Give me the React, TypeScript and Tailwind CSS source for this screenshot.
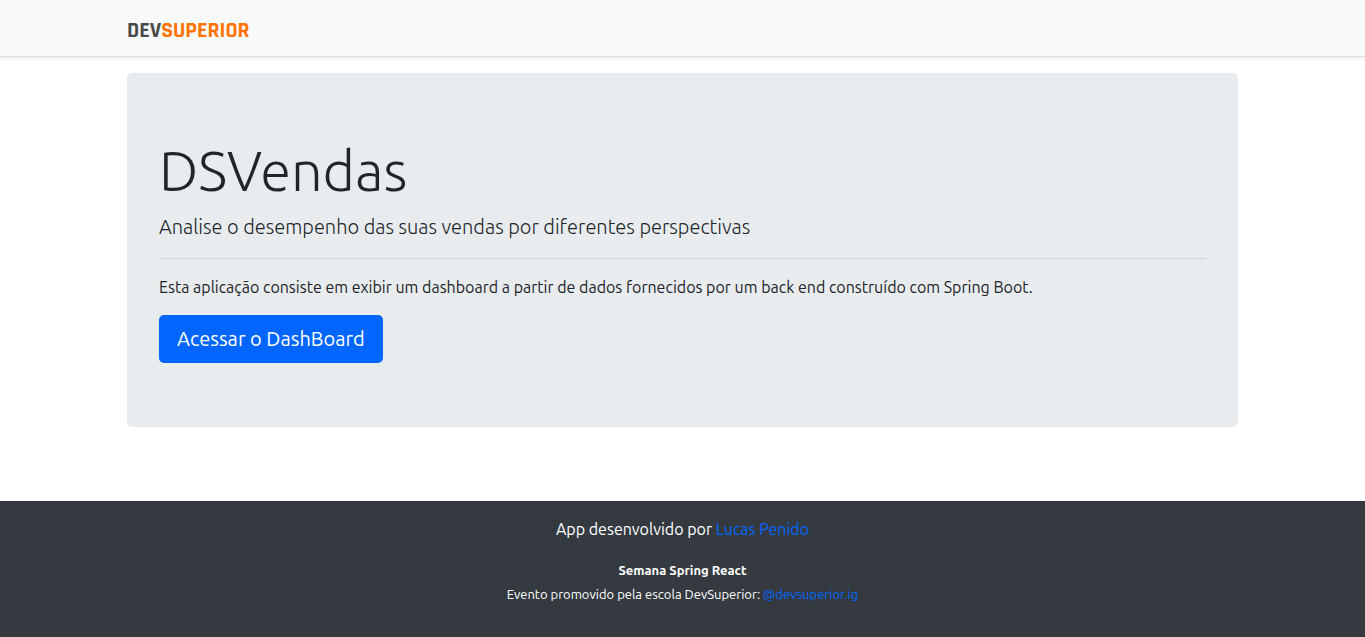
function NavBar() {
  return (
    <header className="border-b border-[#dee2e6] bg-[#f8f9fa] shadow-[0_2px_4px_rgba(0,0,0,0.075)]">
      <div className="mx-auto flex h-14 max-w-[1141px] items-center px-[15px]">
        <a
          href="#home"
          className="mt-1.5 font-['Rajdhani','Roboto',sans-serif] text-[22px] leading-6 font-bold text-[#4a4a4a]"
        >
          DEV<span className="text-[#ff7300]">SUPERIOR</span>
        </a>
      </div>
    </header>
  );
}

function Hero() {
  return (
    <main className="mx-auto mt-4 w-full max-w-[1141px] px-[15px]">
      <section className="rounded-[5px] bg-[#e9ecef] px-8 py-16">
        <h1 className="mb-2 text-[56px] leading-[67px] font-light">DSVendas</h1>
        <p className="text-xl leading-[30px] font-light">
          Analise o desempenho das suas vendas por diferentes perspectivas
        </p>
        <hr className="my-4 border-[#cfd3d6]" />
        <p className="mb-4 text-base leading-6">
          Esta aplicação consiste em exibir um dashboard a partir de dados fornecidos por um back end construído com
          Spring Boot.
        </p>
        <a
          href="#dashboard"
          className="inline-flex h-12 items-center rounded-[5px] bg-[#0066ff] px-[18px] text-xl text-white"
        >
          Acessar o DashBoard
        </a>
      </section>
    </main>
  );
}

function Footer() {
  return (
    <footer className="mt-auto bg-[#343a40] px-4 pt-4 pb-8 text-center text-base leading-6 text-white">
      <p className="mb-4">
        App desenvolvido por{" "}
        <a href="#author" className="text-[#0066ff]">
          Lucas Penido
        </a>
      </p>
      <p>
        <strong className="text-[13px] leading-4 font-bold">Semana Spring React</strong>
      </p>
      <p>
        <small className="text-[13px] leading-4">
          Evento promovido pela escola DevSuperior:{" "}
          <a href="#instagram" className="text-[#0066ff]">
            @devsuperior.ig
          </a>
        </small>
      </p>
    </footer>
  );
}

export default function App() {
  return (
    <div className="flex min-h-screen flex-col bg-white font-['Ubuntu','Open_Sans',sans-serif] text-[#212529]">
      <NavBar />
      <Hero />
      <Footer />
    </div>
  );
}
